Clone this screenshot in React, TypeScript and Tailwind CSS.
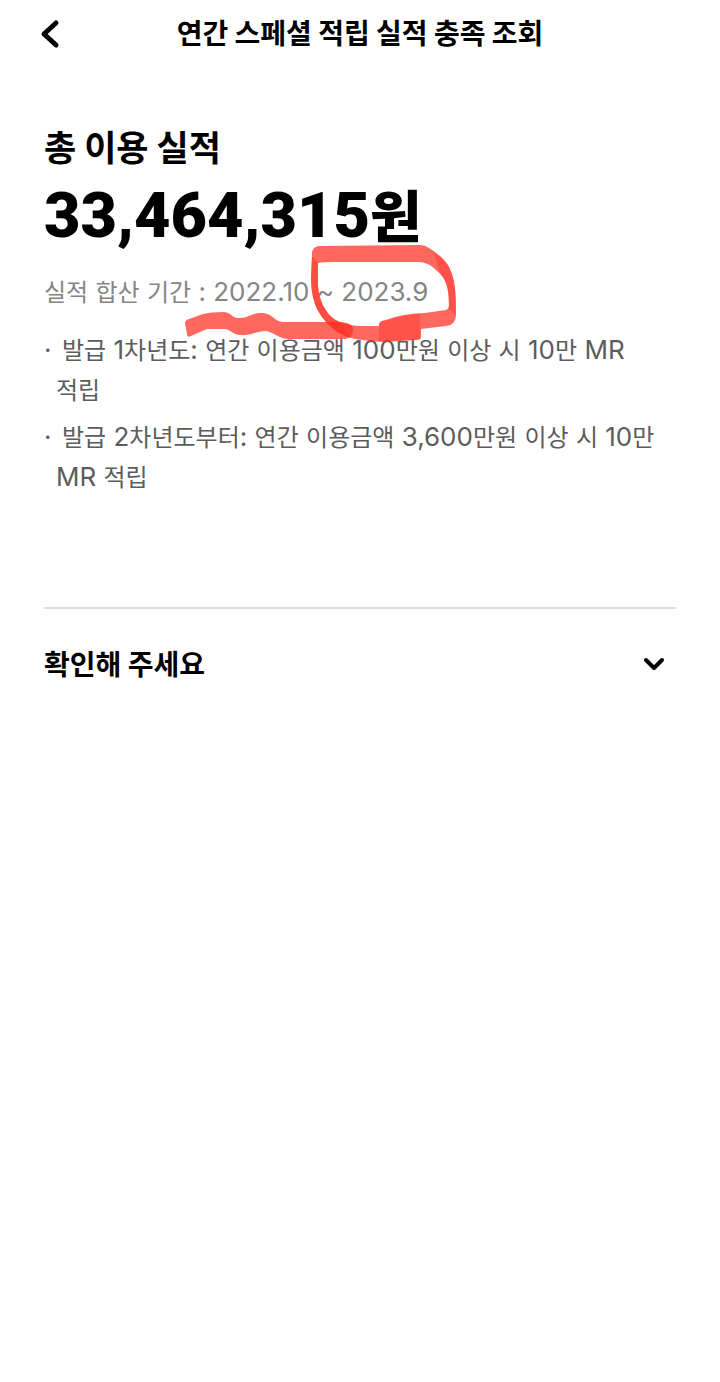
import { useState } from 'react'

const conditions = [
  '발급 1차년도: 연간 이용금액 100만원 이상 시 10만 MR 적립',
  '발급 2차년도부터: 연간 이용금액 3,600만원 이상 시 10만 MR 적립',
]

// Hangul is set slightly smaller than the digits and Latin letters beside it
function MixedText({ text }: { text: string }) {
  return text.split(/([가-힣]+)/).map((part, index) =>
    index % 2 === 1 ? (
      <span key={index} className="text-[24px] leading-none">
        {part}
      </span>
    ) : (
      part
    )
  )
}

// Marker strokes around the aggregation period
function PeriodMarker() {
  return (
    <svg
      className="pointer-events-none absolute left-[136px] -top-8 h-[105px] w-[280px]"
      viewBox="180 240 280 105"
      fill="#ff3023"
      fillOpacity="0.73"
      aria-hidden="true"
    >
      <path d="M185 323Q185 320 189 319L203 314Q210 312 224 312C232 313 233 319 240 318C248 318 252 313 261 313C273 313 274 322 284 322H338C347 322 353 324 353 330Q353 338 345 339H290C277 339 274 331 264 331C254 332 250 336 241 335C232 335 231 329 224 329H207L191 336Q187 338 187 334Z" />
      <path d="M312 254Q312 246 320 246L420 245Q425 245 429 248C440 255 446 261 449 267C455 280 456 290 456 315Q456 325 446 326L421 329V337Q421 340 416 340L385 342Q374 342 355 339C345 337 335 332 326 322C316 311 311 298 311 278ZM318 263V285C319 302 327 317 340 322Q350 326 362 326H379Q378 321 386 320Q405 313 425 313L446 310Q449 309 449 304C449 284 444 277 437 271Q430 263 420 262H333Q323 262 318 263Z" />
      <path d="M379 326Q378 321 386 320Q403 315 420 314V337Q420 340 416 340L379 341Z" fillOpacity="0.35" />
      {/* Denser ink where the nib turns downwards */}
      <path d="M312 256L318 263V285C319 302 327 317 340 322L350 338C341 335 333 330 326 322C316 311 311 298 311 278Z" fillOpacity="0.5" />
      <path d="M434 253C444 259 447 263 449 267C455 280 456 290 456 315L449 309C449 284 445 279 440 273Z" fillOpacity="0.4" />
    </svg>
  )
}

export default function App() {
  const [isOpen, setIsOpen] = useState(false)

  return (
    <div className="min-h-screen bg-white font-['Inter','Noto_Sans_CJK_KR',sans-serif] break-keep text-black">
      <header className="grid h-16 grid-cols-[1fr_auto_1fr] items-center px-9">
        <button type="button" aria-label="뒤로" className="flex h-10 w-7 items-center justify-center">
          <svg width="28" height="36" viewBox="0 0 28 36" fill="none" stroke="currentColor" strokeWidth="5" strokeLinecap="round" strokeLinejoin="round" aria-hidden="true">
            <path d="M20 9L8 20L20 31" />
          </svg>
        </button>
        <h1 className="font-['Noto_Sans_CJK_KR',sans-serif] text-[28px] leading-10 font-bold">
          연간 스페셜 적립 실적 충족 조회
        </h1>
      </header>

      <main className="px-11 pt-[62px]">
        <h2 className="font-['Noto_Sans_CJK_KR',sans-serif] text-[35px] leading-10 font-bold">총 이용 실적</h2>
        <p className="mt-[18px] font-['Roboto','Noto_Sans_CJK_KR',sans-serif] text-[63px] leading-16 font-black">
          33,464,315<span className="text-[56px] leading-none">원</span>
        </p>

        <div className="relative mt-6">
          <p className="text-[26px] leading-10 text-[#858585]">
            <MixedText text="실적 합산 기간 : 2022.10 ~ 2023.9" />
          </p>
          <PeriodMarker />
        </div>

        <ul className="mt-[18px] flex flex-col gap-[7px] pr-2 text-[26px] leading-10 text-[#5c5c5c]">
          {conditions.map((text) => (
            <li key={text} className="pl-3 -indent-3">
              <span className="inline-block w-[18px] indent-0">·</span>
              <MixedText text={text} />
            </li>
          ))}
        </ul>

        <section className="mt-[110px] border-t-2 border-[#dedede]">
          <button
            type="button"
            aria-expanded={isOpen}
            onClick={() => setIsOpen(!isOpen)}
            className="flex h-[108px] w-full items-center justify-between pr-2 text-left"
          >
            <span className="font-['Noto_Sans_CJK_KR',sans-serif] text-[28px] leading-10 font-bold">확인해 주세요</span>
            <svg width="28" height="28" viewBox="0 0 28 28" fill="none" stroke="currentColor" strokeWidth="4" strokeLinecap="round" strokeLinejoin="round" aria-hidden="true">
              <path d="M6 11L14 19L22 11" />
            </svg>
          </button>
        </section>
      </main>
    </div>
  )
}
